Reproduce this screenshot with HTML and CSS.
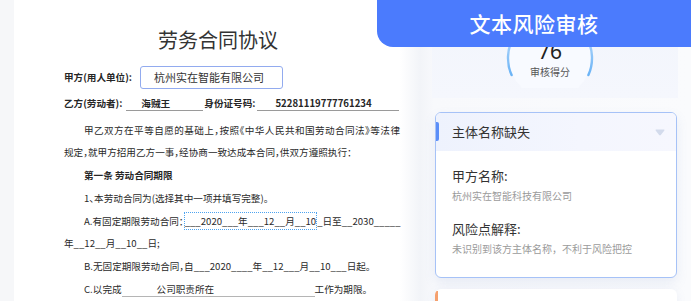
FILE: index.html
```html
<!DOCTYPE html>
<html lang="zh-CN">
<head>
<meta charset="utf-8">
<title>文本风险审核</title>
<link rel="stylesheet" href="styles.css">
</head>
<body>
<div class="app">
  <div class="strip"></div>
  <div class="doc">
    <div class="title-row"><span class="title">劳务合同协议</span></div>
    <div class="row party-a">
      <b class="label">甲方(用人单位):</b>
      <span class="field-box">杭州实在智能有限公司</span>
    </div>
    <div class="row party-b">
      <b class="label">乙方(劳动者):</b>
      <b class="fill fill-name">海贼王</b>
      <b class="label">身份证号码:</b>
      <b class="fill fill-id">52281119777761234</b>
    </div>
    <p class="para justify-line indent">甲乙双方在平等自愿的基础上，按照《中华人民共和国劳动合同法》等法律</p>
    <p class="para">规定，就甲方招用乙方一事，经协商一致达成本合同，供双方遵照执行：</p>
    <p class="para indent strong gap">第一条 劳动合同期限</p>
    <p class="para indent gap">1、本劳动合同为(选择其中一项并填写完整)。</p>
    <p class="para indent gap">A.有固定期限劳动合同：<span class="dotted">___2020___年___12__月__10</span>_日至__2030_____<br>年__12__月__10__日;</p>
    <p class="para indent gap">B.无固定期限劳动合同，自___2020____年__12___月__10___日起。</p>
    <p class="para indent gap">C.以完成<span class="blank">公司职责所在</span>工作为期限。</p>
  </div>
  <div class="panel">
    <div class="score">
      <div class="gauge">
        <svg class="ring" width="100" height="80" viewBox="0 0 100 80">
          <defs>
            <linearGradient id="rg" x1="0" y1="1" x2="0" y2="0">
              <stop offset="0" stop-color="#6ab3f6"/>
              <stop offset="1" stop-color="#d6e9fc"/>
            </linearGradient>
          </defs>
          <circle cx="50" cy="50" r="41" fill="#f8faff"/>
          <path d="M11.6 67.1 A42 42 0 1 1 88.4 67.1" fill="none" stroke="url(#rg)" stroke-width="2.4" stroke-linecap="round"/>
        </svg>
        <div class="score-num">76</div>
        <div class="score-label">审核得分</div>
      </div>
    </div>
    <div class="risk-card">
      <div class="risk-head">
        <span class="risk-title">主体名称缺失</span>
        <svg class="caret" width="10" height="7" viewBox="0 0 10 7"><path d="M1.2 0.6 H8.8 Q10 0.6 9.2 1.8 L5.8 6 Q5 6.8 4.2 6 L0.8 1.8 Q0 0.6 1.2 0.6 Z" fill="#d3dbec"/></svg>
      </div>
      <div class="risk-body">
        <div class="risk-label">甲方名称:</div>
        <div class="risk-value">杭州实在智能科技有限公司</div>
        <div class="risk-label second">风险点解释:</div>
        <div class="risk-value">未识别到该方主体名称，不利于风险把控</div>
      </div>
    </div>
    <div class="next-card"></div>
  </div>
  <div class="banner">文本风险审核</div>
</div>
</body>
</html>
```
FILE: styles.css
```css
* { box-sizing: border-box; }
html, body { margin: 0; padding: 0; }
body {
  width: 691px;
  height: 301px;
  overflow: hidden;
  background: #f6f7f9;
  font-family: "Noto Sans CJK SC", "Noto Sans", sans-serif;
  color: #333;
}
.app {
  position: relative;
  display: flex;
  width: 691px;
  height: 301px;
  overflow: hidden;
}
.strip {
  width: 14px;
  flex: none;
  background: #f6f7f9;
}
.doc {
  width: 406px;
  flex: none;
  background: linear-gradient(90deg, #ffffff 0, #ffffff 386px, #f2f4f8 406px);
  padding: 24px 20px 0 50px;
  font-size: 9.6px;
  color: #2a2a2a;
}
.title-row {
  height: 32px;
  padding-left: 94px;
  line-height: 32px;
}
.title {
  position: relative;
  display: inline-block;
  font-size: 20px;
  color: #333;
  line-height: 32px;
}
.title::before {
  content: "";
  position: absolute;
  left: 14px;
  top: 1px;
  width: 119px;
  height: 32px;
  background: #f3f4f9;
  z-index: -1;
}
.row {
  display: flex;
  align-items: center;
  height: 24px;
}
.party-a { margin-top: 9px; }
.party-b { margin-top: 2px; }
.label {
  font-weight: 700;
  color: #262626;
  white-space: nowrap;
}
.field-box {
  margin-left: 8px;
  width: 143px;
  height: 23px;
  border: 1px solid #92abef;
  border-radius: 3px;
  background: #fff;
  padding-left: 13px;
  font-size: 11px;
  line-height: 21px;
  color: #333;
}
.fill {
  display: inline-block;
  height: 15px;
  line-height: 14px;
  margin-top: 1px;
  border-bottom: 1px solid #9a9a9a;
  font-weight: 700;
  color: #262626;
  white-space: nowrap;
}
.fill-name {
  width: 77px;
  margin-left: 4px;
  margin-right: 1px;
  padding-left: 15px;
}
.fill-id {
  width: 142px;
  margin-left: 2px;
  padding-left: 18px;
  font-weight: 600;
}
.para {
  margin: 0;
  line-height: 22px;
  white-space: nowrap;
  font-feature-settings: "halt";
}
.para:first-of-type { margin-top: 4px; }
.indent { text-indent: 20px; }
.justify-line {
  text-align: justify;
  text-align-last: justify;
  white-space: normal;
}
.strong {
  font-weight: 700;
  color: #262626;
}
.gap { margin-top: 1px; }
.dotted {
  display: inline-block;
  text-indent: 0;
  border: 1px dotted #4ea4f0;
  line-height: 16px;
}
.blank {
  display: inline-block;
  text-indent: 0;
  width: 193px;
  padding-left: 35px;
  line-height: 14px;
  border-bottom: 1px solid #b5b5b5;
}
.panel {
  flex: 1;
  background: linear-gradient(90deg, #f2f4f8 0, #f8f9fc 14px, #fafbfd 100%);
  padding-left: 12px;
}
.score {
  width: 246px;
  height: 98px;
  background: linear-gradient(180deg, #f2f5fc 0, #f5f7fd 100%);
  padding-top: 8px;
  padding-right: 10px;
}
.gauge {
  position: relative;
  width: 100px;
  height: 80px;
  margin: 0 auto;
  text-align: center;
}
.ring {
  position: absolute;
  left: 0;
  top: 0;
}
.score-num {
  position: relative;
  padding-top: 33px;
  font-family: "Noto Sans", sans-serif;
  font-size: 21px;
  line-height: 20px;
  color: #222;
}
.score-label {
  position: relative;
  margin-top: 4px;
  font-size: 10px;
  line-height: 14px;
  color: #555;
}
.risk-card {
  margin: 14px 0 0 3px;
  width: 242px;
  border: 1px solid #a6c2f7;
  border-radius: 6px;
  background: #fff;
  box-shadow: 0 5px 12px rgba(110, 130, 190, 0.12);
  overflow: hidden;
}
.risk-head {
  position: relative;
  display: flex;
  align-items: center;
  justify-content: space-between;
  height: 38px;
  padding: 0 11px 0 16px;
  background: linear-gradient(90deg, #eef2fd 0, #f4f6fe 60%, #f6f7fe 100%);
}
.risk-head::before {
  content: "";
  position: absolute;
  left: 0;
  top: 9px;
  width: 3px;
  height: 19px;
  border-radius: 0 2px 2px 0;
  background: #5b8ef8;
}
.risk-title {
  font-size: 13px;
  line-height: 38px;
  color: #333;
}
.risk-body {
  padding: 17px 16px 21px;
}
.risk-label {
  font-size: 13px;
  line-height: 16px;
  color: #333;
}
.risk-label.second { margin-top: 18px; }
.risk-value {
  margin-top: 5px;
  font-size: 10px;
  line-height: 14px;
  color: #9b9b9b;
}
.next-card {
  position: relative;
  margin: 11px 0 0 3px;
  width: 242px;
  height: 40px;
  border-radius: 6px;
  background: #fff;
  box-shadow: 0 2px 10px rgba(110, 130, 190, 0.1);
  overflow: hidden;
}
.next-card::before {
  content: "";
  position: absolute;
  left: 0;
  top: 2px;
  width: 3px;
  height: 30px;
  background: #f5a06e;
}
.banner {
  position: absolute;
  top: 0;
  left: 377px;
  right: 0;
  height: 47px;
  background: #4b7bfd;
  border-bottom-left-radius: 16px;
  color: #fff;
  font-size: 21px;
  font-weight: 500;
  line-height: 46px;
  text-align: center;
  letter-spacing: 0.5px;
}
```
